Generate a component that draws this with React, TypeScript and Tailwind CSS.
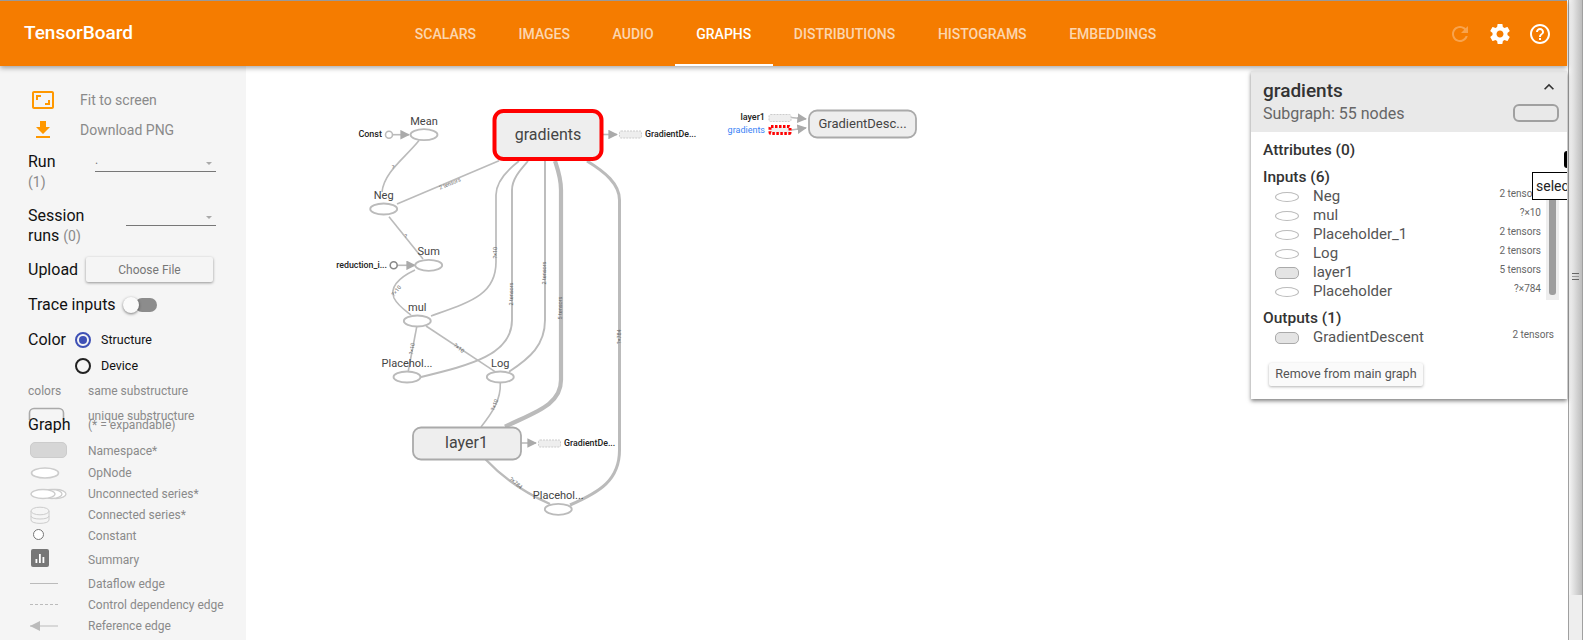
import type { ReactNode } from "react";

const tabs = ["Scalars", "Images", "Audio", "Graphs", "Distributions", "Histograms", "Embeddings"];

const edges = [
  { d: "M393 134.7 H409", w: 1.6, arrow: true },
  { d: "M419 140.5 C405 158 384 172 382 192", w: 1.6 },
  { d: "M397 204 L499 160.7", w: 1.6 },
  { d: "M389 216.7 L423 259", w: 1.6 },
  { d: "M398 265.3 H415", w: 1.6, arrow: true },
  { d: "M415 270 C396 279 390 288 394 298 C398 306 406 311 411 315", w: 1.6 },
  { d: "M431 316 C470 302 496 295 496 262 V195 C496 180 510 168 519 161", w: 1.7 },
  { d: "M421 377 C470 365 512 355 512 320 V190 C512 178 522 168 528 161", w: 1.9 },
  { d: "M509 371.7 C530 358 545 345 545 320 V161", w: 1.9 },
  { d: "M505 426.7 C535 412 561 405 561 380 V190 C561 178 558 170 555 161", w: 4.2 },
  { d: "M570 505 C600 492 619.5 480 619.5 450 V200 C619.5 184 605 172 587 161", w: 3 },
  { d: "M416.7 327 L408.3 371", w: 1.6 },
  { d: "M426 326 L495 371.7", w: 1.6 },
  { d: "M500.3 383 C501 400 492 413 481 427", w: 1.6 },
  { d: "M485.7 459.5 C505 480 530 495 550 504", w: 2.4 },
  { d: "M603 134.5 H617", w: 1.6, arrow: true },
  { d: "M521 443 H536", w: 1.6, arrow: true },
  { d: "M791 117.5 L806 119", w: 1.6, arrow: true },
  { d: "M791 130 L806 128", w: 1.6, arrow: true },
];

const edgeLabels = [
  { t: "?", x: 393, y: 168, r: 0 },
  { t: "2 tensors", x: 450, y: 184, r: -23 },
  { t: "?", x: 405.7, y: 237, r: 0 },
  { t: "?×10", x: 396.7, y: 291, r: -50 },
  { t: "?×10", x: 495.7, y: 252.7, r: -90 },
  { t: "2 tensors", x: 512, y: 294, r: -90 },
  { t: "2 tensors", x: 545, y: 273, r: -90 },
  { t: "5 tensors", x: 560.7, y: 308, r: -90 },
  { t: "?×784", x: 619.7, y: 336.7, r: -90 },
  { t: "?×10", x: 412.3, y: 348.7, r: -80 },
  { t: "?×10", x: 458.7, y: 348.3, r: 38 },
  { t: "?×10", x: 495, y: 405, r: -70 },
  { t: "?×784", x: 515.7, y: 483.3, r: 40 },
];

const opNodes = [
  { label: "Mean", x: 424, y: 134.7 },
  { label: "Neg", x: 383.7, y: 209 },
  { label: "Sum", x: 428.7, y: 265.3 },
  { label: "mul", x: 417.3, y: 321 },
  { label: "Placehol...", x: 407, y: 377 },
  { label: "Log", x: 500.3, y: 377 },
  { label: "Placehol...", x: 558.3, y: 509.3 },
];

function GraphCanvas() {
  return (
    <svg viewBox="246 66 1321 574" className="block h-full w-full" fontFamily="Roboto, sans-serif">
      <defs>
        <marker id="arrow" viewBox="0 0 10 10" refX="9" refY="5" markerWidth="6" markerHeight="6" orient="auto">
          <path d="M0 0 L10 5 L0 10 z" fill="#aaa" />
        </marker>
      </defs>

      {edges.map((e, i) => (
        <path key={i} d={e.d} fill="none" stroke="#bbb" strokeWidth={e.w} markerEnd={e.arrow ? "url(#arrow)" : undefined} />
      ))}
      {edgeLabels.map((l, i) => (
        <text key={i} x={l.x} y={l.y} fontSize="5.5" fill="#666" textAnchor="middle" dominantBaseline="middle" transform={`rotate(${l.r} ${l.x} ${l.y})`}>
          {l.t}
        </text>
      ))}

      {/* Namespace nodes */}
      <rect x="494.5" y="111" width="107" height="48" rx="9" fill="#eee" stroke="#f00" strokeWidth="4" />
      <text x="548" y="136" fontSize="16" fill="#444" textAnchor="middle" dominantBaseline="middle">gradients</text>
      <rect x="413" y="427.5" width="108" height="32" rx="8" fill="#eee" stroke="#aaa" strokeWidth="1.8" />
      <text x="466.5" y="444" fontSize="16" fill="#444" textAnchor="middle" dominantBaseline="middle">layer1</text>
      <rect x="809" y="110.5" width="107" height="27" rx="8" fill="#eee" stroke="#aaa" strokeWidth="1.8" />
      <text x="862.5" y="125" fontSize="13" fill="#444" textAnchor="middle" dominantBaseline="middle">GradientDesc...</text>

      {/* Op nodes */}
      {opNodes.map((n) => (
        <g key={n.x}>
          <ellipse cx={n.x} cy={n.y} rx="13.5" ry="5.5" fill="#fff" stroke="#bbb" strokeWidth="1.8" />
          <text x={n.x} y={n.y - 13} fontSize="11" fill="#444" textAnchor="middle" dominantBaseline="middle">{n.label}</text>
        </g>
      ))}

      {/* Constants */}
      <circle cx="389" cy="134.7" r="3.5" fill="#fff" stroke="#bbb" strokeWidth="1.6" />
      <text x="382" y="135" fontSize="9" fontWeight="500" fill="#222" textAnchor="end" dominantBaseline="middle">Const</text>
      <circle cx="393.7" cy="265.3" r="3.5" fill="#fff" stroke="#888" strokeWidth="1.6" />
      <text x="387" y="265.5" fontSize="8.8" fontWeight="500" fill="#222" textAnchor="end" dominantBaseline="middle">reduction_i...</text>

      {/* Auxiliary stubs */}
      <rect x="619.5" y="131" width="22" height="7" rx="1.5" fill="#eee" stroke="#ccc" strokeDasharray="2 1" />
      <text x="645" y="134.5" fontSize="8.8" fontWeight="500" fill="#222" dominantBaseline="middle">GradientDe...</text>
      <rect x="538.5" y="440" width="22" height="7" rx="1.5" fill="#eee" stroke="#ccc" strokeDasharray="2 1" />
      <text x="564" y="443.5" fontSize="8.8" fontWeight="500" fill="#222" dominantBaseline="middle">GradientDe...</text>
      <rect x="769" y="114.5" width="22" height="7" rx="1.5" fill="#eee" stroke="#ccc" strokeDasharray="2 1" />
      <text x="765" y="118" fontSize="9" fontWeight="500" fill="#222" textAnchor="end" dominantBaseline="middle">layer1</text>
      <rect x="770" y="126.5" width="20" height="7" rx="1" fill="#eee" stroke="#f00" strokeWidth="3" strokeDasharray="2.5 1.5" />
      <text x="765" y="131" fontSize="9" fill="#3b82f6" textAnchor="end" dominantBaseline="middle">gradients</text>
    </svg>
  );
}

function MIcon({ d, className }: { d: string; className: string }) {
  return (
    <svg viewBox="0 0 24 24" fill="currentColor" className={className}>
      <path d={d} />
    </svg>
  );
}

function LegendRow({ icon, label, className }: { icon?: ReactNode; label: string; className: string }) {
  return (
    <div className={`flex items-center ${className}`}>
      <div className="flex w-[60px] items-center">{icon}</div>
      <span>{label}</span>
    </div>
  );
}

function Sidebar() {
  return (
    <aside className="w-[246px] shrink-0 overflow-hidden bg-[#f5f5f5] pl-7 pt-[19px] text-[16px] text-[#111]">
      <div className="flex h-[30px] items-center text-[14px] text-[#8a8a8a]">
        <MIcon
          className="ml-[3px] mr-[25px] size-6 text-[#ff9800]"
          d="M19 12h-2v3h-3v2h5v-5zM7 9h3V7H5v5h2V9zm14-6H3c-1.1 0-2 .9-2 2v14c0 1.1.9 2 2 2h18c1.1 0 2-.9 2-2V5c0-1.1-.9-2-2-2zm0 16.01H3V4.99h18v14.02z"
        />
        Fit to screen
      </div>
      <div className="flex h-[30px] items-center text-[14px] text-[#8a8a8a]">
        <MIcon className="ml-[3px] mr-[25px] size-6 text-[#ff9800]" d="M19 9h-4V3H9v6H5l7 7 7-7zM5 18v2h14v-2H5z" />
        Download PNG
      </div>

      <div className="mt-[7px] flex h-[54px] items-start">
        <div className="w-[67px] leading-5">
          Run
          <div className="text-[14px] text-[#8a8a8a]">(1)</div>
        </div>
        <div className="relative h-5 w-[121px] border-b border-[#777] text-[12px] leading-4 text-[#777]">
          .
          <span className="absolute right-[4px] top-[10px] size-0 border-x-[3.5px] border-t-[3.5px] border-x-transparent border-t-[#aaa]" />
        </div>
      </div>
      <div className="flex h-[50px] items-start">
        <div className="w-[98px] leading-5">
          Session
          <div>
            runs <span className="text-[14px] text-[#8a8a8a]">(0)</span>
          </div>
        </div>
        <div className="relative h-5 w-[90px] border-b border-[#777]">
          <span className="absolute right-[4px] top-[10px] size-0 border-x-[3.5px] border-x-transparent border-t-[3.5px] border-t-[#aaa]" />
        </div>
      </div>

      <div className="mt-[1px] flex h-[25px] items-center">
        <span className="w-[58px]">Upload</span>
        <button className="h-[25px] w-[127px] rounded-[2px] bg-[#f5f5f5] text-[12px] text-[#777] shadow-[0_1px_3px_rgba(0,0,0,0.4)]">
          Choose File
        </button>
      </div>

      <div className="mt-[13px] flex h-5 items-center">
        <span className="w-[95px]">Trace inputs</span>
        <span className="relative ml-[12px] h-[14px] w-[22px] rounded-full bg-[#8c8c8c]">
          <span className="absolute -left-[12px] -top-[1px] size-4 rounded-full bg-[#fafafa] shadow-[0_1px_3px_rgba(0,0,0,0.5)]" />
        </span>
      </div>

      <div className="mt-[12px] flex h-[26px] items-center">
        <span className="w-[47px]">Color</span>
        <span className="mr-[10px] flex size-4 items-center justify-center rounded-full border-2 border-[#3f51b5]">
          <span className="size-2 rounded-full bg-[#3f51b5]" />
        </span>
        <span className="text-[12.5px]">Structure</span>
      </div>
      <div className="flex h-[26px] items-center">
        <span className="ml-[47px] mr-[10px] size-4 rounded-full border-2 border-[#222]" />
        <span className="text-[12.5px]">Device</span>
      </div>

      <div className="relative -mt-px text-[12px] text-[#8a8a8a]">
        <LegendRow className="h-[25px]" icon={<span>colors</span>} label="same substructure" />
        <LegendRow
          className="h-[25px]"
          icon={
            <svg width="37" height="17">
              <path d="M1.5 13 V6 a4.5 4.5 0 0 1 4.5-4.5 H31 a4.5 4.5 0 0 1 4.5 4.5 V13" fill="none" stroke="#aaa" strokeWidth="1.6" />
            </svg>
          }
          label="unique substructure"
        />
        <div className="absolute left-0 top-[37px] flex h-5 items-center">
          <span className="w-[60px] text-[16px] text-[#111]">Graph</span>
          <span>(* = expandable)</span>
        </div>
      </div>

      <div className="mt-[12px] text-[12px] text-[#8a8a8a]">
        <LegendRow
          className="h-[22px]"
          icon={<span className="mb-[3px] ml-[2px] h-4 w-[37px] rounded-[5px] border border-[#ccc] bg-[#d6d6d6]" />}
          label="Namespace*"
        />
        <LegendRow
          className="h-[21px]"
          icon={
            <svg width="32" height="14">
              <ellipse cx="17" cy="7" rx="13.5" ry="5" fill="#fff" stroke="#ccc" strokeWidth="1.6" />
            </svg>
          }
          label="OpNode"
        />
        <LegendRow
          className="h-[21px]"
          icon={
            <svg width="40" height="14">
              <ellipse cx="28" cy="7" rx="10" ry="4.5" fill="#fff" stroke="#ccc" strokeWidth="1.3" />
              <ellipse cx="24" cy="7" rx="10" ry="4.5" fill="#fff" stroke="#ccc" strokeWidth="1.3" />
              <ellipse cx="15" cy="7" rx="12" ry="4.5" fill="#fff" stroke="#ccc" strokeWidth="1.3" />
            </svg>
          }
          label="Unconnected series*"
        />
        <LegendRow
          className="h-[21px]"
          icon={
            <svg width="24" height="18">
              <path d="M3 5 V14 C3 18.5 21 18.5 21 14 V5" fill="#f5f5f5" stroke="#ccc" />
              <path d="M3 10 C3 14 21 14 21 10" fill="none" stroke="#ccc" />
              <ellipse cx="12" cy="5" rx="9" ry="3.8" fill="#f5f5f5" stroke="#ccc" />
            </svg>
          }
          label="Connected series*"
        />
        <LegendRow
          className="h-[21px]"
          icon={<span className="ml-[5px] mb-[2px] size-[11px] rounded-full border border-[#777] bg-white" />}
          label="Constant"
        />
        <LegendRow
          className="h-[27px]"
          icon={
            <svg width="18" height="18" className="ml-[3px] mb-[3px]">
              <rect width="18" height="18" rx="2" fill="#777" />
              <path d="M4.5 10 h1.8 v4 h-1.8z M8 5 h1.8 v9 h-1.8z M11.5 8 h1.8 v6 h-1.8z" fill="#fff" />
            </svg>
          }
          label="Summary"
        />
        <LegendRow
          className="h-[21px]"
          icon={<span className="ml-[2px] h-px w-[28px] bg-[#bbb]" />}
          label="Dataflow edge"
        />
        <LegendRow
          className="h-[21px]"
          icon={<span className="ml-[2px] w-[28px] border-t border-dashed border-[#bbb]" />}
          label="Control dependency edge"
        />
        <LegendRow
          className="h-[21px]"
          icon={
            <svg width="32" height="12">
              <path d="M2 6 H30" stroke="#bbb" />
              <path d="M2 6 L12 1 V11 z" fill="#bbb" />
            </svg>
          }
          label="Reference edge"
        />
      </div>
    </aside>
  );
}

const inputs = [
  { name: "Neg", size: "2 tensors" },
  { name: "mul", size: "?×10" },
  { name: "Placeholder_1", size: "2 tensors" },
  { name: "Log", size: "2 tensors" },
  { name: "layer1", size: "5 tensors", meta: true },
  { name: "Placeholder", size: "?×784" },
];

function NodeRow({ name, size, meta, pad }: { name: string; size: string; meta?: boolean; pad: string }) {
  return (
    <div className={`flex h-[19px] items-center pl-6 ${pad}`}>
      {meta ? (
        <span className="mr-[14px] h-[12px] w-6 rounded-[5px] border border-[#aaa] bg-[#e4e4e4]" />
      ) : (
        <span className="mr-[14px] h-[10px] w-6 rounded-[50%] border-[1.5px] border-[#bbb] bg-white" />
      )}
      <span className="flex-1 text-[15px] text-[#555]">{name}</span>
      <span className="-mt-[7px] text-[10px] text-[#666]">{size}</span>
    </div>
  );
}

function InfoPanel() {
  return (
    <div className="absolute right-0 top-[5px] h-[328px] w-[316px] overflow-hidden bg-white shadow-[0_2px_4px_rgba(0,0,0,0.5)]">
      <div className="relative h-[61px] bg-[#e9e9e9] px-3 pt-[7px]">
        <div className="text-[19px] font-medium leading-[26px] text-[#333]">gradients</div>
        <div className="text-[16px] leading-[20px] text-[#666]">Subgraph: 55 nodes</div>
        <MIcon className="absolute right-[8px] top-[6px] size-5 text-[#333]" d="M7.41 15.41L12 10.83l4.59 4.58L18 14l-6-6-6 6z" />
        <span className="absolute right-2 top-[33px] h-[18px] w-[46px] rounded-[6px] border-2 border-[#a0a0a0]" />
      </div>

      <div className="px-3 pt-[8px] text-[15.5px] font-medium leading-5 text-[#333]">Attributes (0)</div>
      <div className="px-3 pt-[7px] text-[15.5px] font-medium leading-5 text-[#333]">Inputs (6)</div>
      <div>
        {inputs.map((row) => (
          <NodeRow key={row.name} {...row} pad="pr-[26px]" />
        ))}
      </div>
      <div className="px-3 pt-[7px] text-[15.5px] font-medium leading-5 text-[#333]">Outputs (1)</div>
      <NodeRow name="GradientDescent" size="2 tensors" meta pad="pr-[13px]" />

      <button className="ml-[18px] mt-4 h-[23px] w-[154px] rounded-[2px] bg-[#fafafa] text-[12.6px] text-[#555] shadow-[0_1px_3px_rgba(0,0,0,0.3)]">
        Remove from main graph
      </button>

      {/* scrollbar of the inputs list */}
      <div className="absolute left-[295px] top-[115px] flex h-[114px] w-[13px] justify-center bg-[#eee]">
        <span className="h-[109px] w-[7px] rounded-b-[3px] bg-[#9e9e9e]" />
      </div>

      {/* tooltip and its pointer */}
      <span className="absolute left-[313px] top-[80px] h-[17px] w-[3px] rounded-l-[3px] bg-black" />
      <div className="absolute left-[281px] top-[101px] h-[28px] w-[60px] border border-black bg-white pl-[3px] text-[14px] leading-[27px] text-[#222]">
        select
      </div>
    </div>
  );
}

export default function App() {
  return (
    <div className="flex h-[640px] w-[1583px] overflow-hidden bg-white [font-family:Roboto,sans-serif]">
      <div className="flex w-[1567px] shrink-0 flex-col">
        <header className="z-10 flex h-[66px] shrink-0 items-center border-t border-[#999] bg-[#f57c00] pl-6 pr-[15px] text-white shadow-[0_2px_5px_rgba(0,0,0,0.35)]">
          <div className="w-[369.5px] text-[19px] font-medium">TensorBoard</div>
          <nav className="flex h-full flex-1">
            {tabs.map((tab) => (
              <div
                key={tab}
                className={`flex h-full items-center border-b-2 px-[21.3px] pt-[3px] text-[14px] font-medium uppercase ${
                  tab === "Graphs" ? "border-white text-white" : "border-transparent text-white/70"
                }`}
              >
                {tab}
              </div>
            ))}
          </nav>
          <div className="flex items-center gap-4">
            <MIcon
              className="size-6 text-white/30"
              d="M17.65 6.35C16.2 4.9 14.21 4 12 4c-4.42 0-7.99 3.58-7.99 8s3.57 8 7.99 8c3.73 0 6.84-2.55 7.73-6h-2.08c-.82 2.33-3.04 4-5.65 4-3.31 0-6-2.69-6-6s2.69-6 6-6c1.66 0 3.14.69 4.22 1.78L13 11h7V4l-2.35 2.35z"
            />
            <MIcon
              className="size-6"
              d="M19.43 12.98c.04-.32.07-.64.07-.98s-.03-.66-.07-.98l2.11-1.65c.19-.15.24-.42.12-.64l-2-3.46c-.12-.22-.39-.3-.61-.22l-2.49 1c-.52-.4-1.08-.73-1.69-.98l-.38-2.65C14.46 2.18 14.25 2 14 2h-4c-.25 0-.46.18-.49.42l-.38 2.65c-.61.25-1.17.59-1.69.98l-2.49-1c-.23-.09-.49 0-.61.22l-2 3.46c-.13.22-.07.49.12.64l2.11 1.65c-.04.32-.07.65-.07.98s.03.66.07.98l-2.11 1.65c-.19.15-.24.42-.12.64l2 3.46c.12.22.39.3.61.22l2.49-1c.52.4 1.08.73 1.69.98l.38 2.65c.03.24.24.42.49.42h4c.25 0 .46-.18.49-.42l.38-2.65c.61-.25 1.17-.59 1.69-.98l2.49 1c.23.09.49 0 .61-.22l2-3.46c.12-.22.07-.49-.12-.64l-2.11-1.65zM12 15.5c-1.93 0-3.5-1.57-3.5-3.5s1.57-3.5 3.5-3.5 3.5 1.57 3.5 3.5-1.57 3.5-3.5 3.5z"
            />
            <MIcon
              className="size-6"
              d="M11 18h2v-2h-2v2zm1-16C6.48 2 2 6.48 2 12s4.48 10 10 10 10-4.48 10-10S17.52 2 12 2zm0 18c-4.41 0-8-3.59-8-8s3.59-8 8-8 8 3.59 8 8-3.59 8-8 8zm0-14c-2.21 0-4 1.79-4 4h2c0-1.1.9-2 2-2s2 .9 2 2c0 2-3 1.75-3 5h2c0-2.25 3-2.5 3-5 0-2.21-1.79-4-4-4z"
            />
          </div>
        </header>

        <div className="flex min-h-0 flex-1">
          <Sidebar />
          <main className="relative min-w-0 flex-1">
            <GraphCanvas />
            <InfoPanel />
          </main>
        </div>
      </div>

      {/* browser scrollbar */}
      <div className="ml-px flex w-[15px] flex-col border-x border-[#a0a0a0]">
        <div className="flex h-[595px] items-center justify-center bg-gradient-to-r from-[#f5f5f5] to-[#bdbdbd]">
          <span className="-mt-[42px] h-[7px] w-[7px] border-y border-[#666] bg-[linear-gradient(#999,#999)] bg-[length:100%_1px] bg-center bg-no-repeat" />
        </div>
        <div className="flex-1 bg-[#eee]" />
      </div>
    </div>
  );
}
